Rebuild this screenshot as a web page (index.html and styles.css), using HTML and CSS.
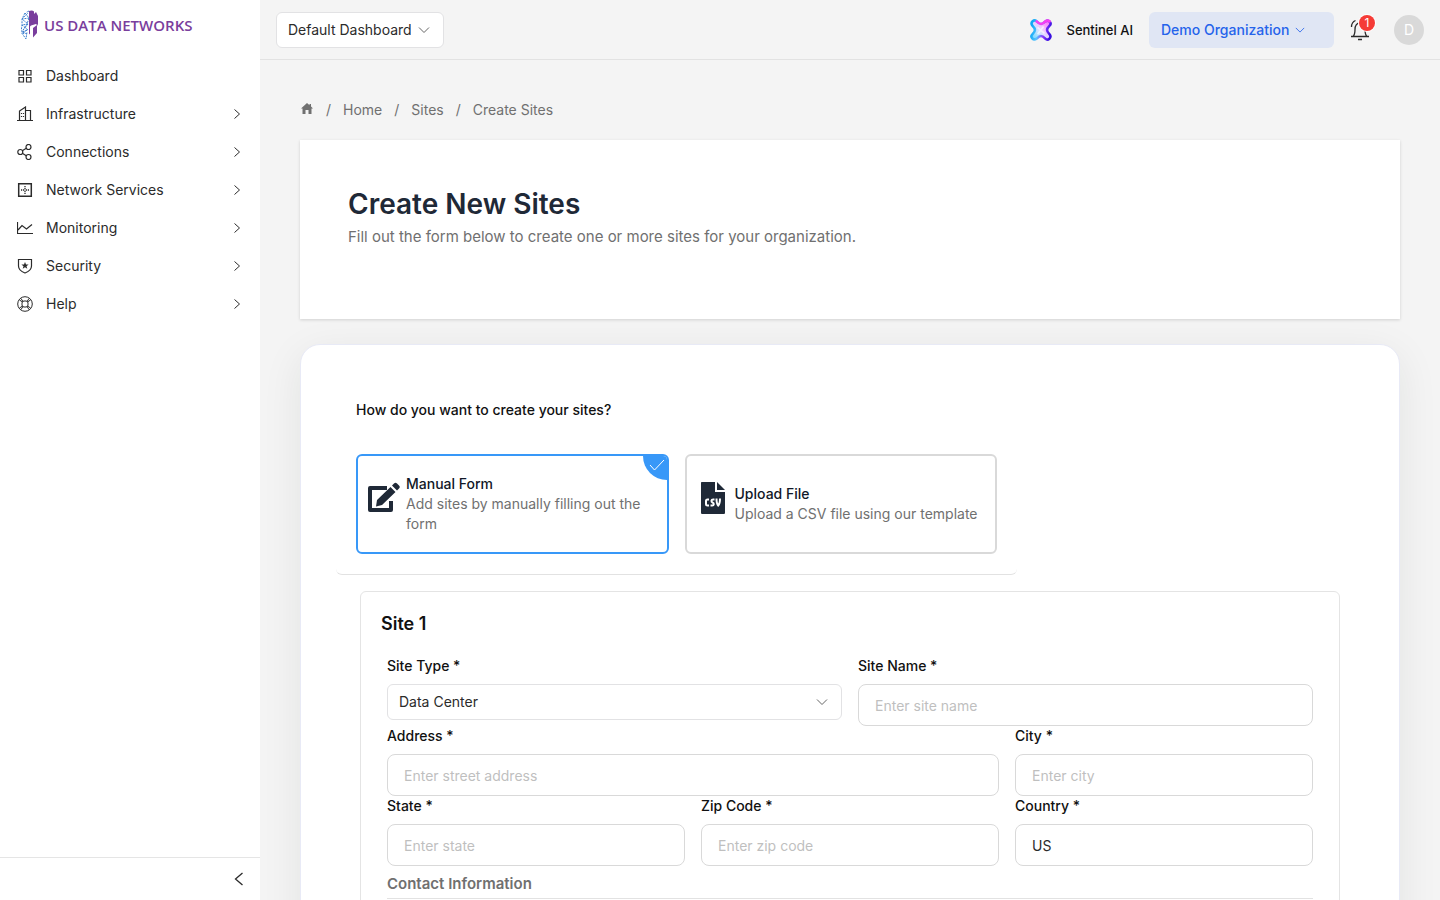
FILE: index.html
```html
<!DOCTYPE html>
<html lang="en">
<head>
    <meta charset="UTF-8">
    <meta name="viewport" content="width=device-width, initial-scale=1.0">
    <title>Create Sites - US Data Networks</title>
    <link rel="stylesheet" href="styles.css">
</head>
<body>
    <svg class="defs" aria-hidden="true">
        <symbol id="chevron-right" viewBox="0 0 12 12"><path d="M3.5 1.5 8.5 6l-5 4.5" /></symbol>
        <symbol id="chevron-down" viewBox="0 0 12 12"><path d="M1 3.5 6 8.5l5-5" /></symbol>
    </svg>

    <div class="app">
        <aside class="sidebar">
            <a class="logo" href="#">
                <svg width="18" height="30" viewBox="0 0 18 30">
                    <path fill="#7a3e9d" d="M8 1c2-1 4-.6 5 .5V4l2-2 2 4v8l-1 2v7l-4 4.500V18l4-3-1-1-5 1.500-1 1v7l-1 1z" />
                    <path fill="none" stroke="#3d80d0" stroke-width="1" stroke-dasharray="2 1" d="M8 1 5 2.500M4 3 1 9v6l-1 7 5 7 1-7M4 3l4 5-7 1 6 5-6 1 6 5-6 2 5 2M8 8l-2 6-5 8M1 9l6-6M7 14l-5 6M2 24l4-5" />
                </svg>
                <span>US DATA NETWORKS</span>
            </a>

            <nav class="nav">
                <a href="#">
                    <svg class="icon" viewBox="0 0 16 16"><path d="M2 2.500h4.500V7H2zM9.500 2.500H14V7H9.500zM2 9.500h4.500V14H2zM9.500 9.500H14V14H9.500z" /></svg>
                    <span>Dashboard</span>
                </a>
                <a href="#">
                    <svg class="icon" viewBox="0 0 16 16"><path d="M0 14.500h16M2.500 14.500V5l6-4v13.500M8.500 4.500h5v10" /><path stroke-dasharray="1 2" d="M4.500 7v5M6.500 7v5" /></svg>
                    <span>Infrastructure</span>
                    <svg class="arrow"><use href="#chevron-right" /></svg>
                </a>
                <a href="#">
                    <svg class="icon" viewBox="0 0 16 16"><circle cx="3.300" cy="8" r="2.500" /><circle cx="11.500" cy="3" r="2.500" /><circle cx="11.500" cy="13" r="2.500" /><path d="m5.300 6.800 4-2.500M5.300 9.200l4 2.500" /></svg>
                    <span>Connections</span>
                    <svg class="arrow"><use href="#chevron-right" /></svg>
                </a>
                <a href="#">
                    <svg class="icon" viewBox="0 0 16 16"><path stroke-width="1.500" d="M1.700 1.700h12.600v12.600H1.700z" /><path d="M4 8h1.200M6 8h1M9 8h1M10.800 8H12M8 4v1.200M8 6v1M8 7.500v1M8 9v1M8 10.800V12" stroke-width="1.300" /></svg>
                    <span>Network Services</span>
                    <svg class="arrow"><use href="#chevron-right" /></svg>
                </a>
                <a href="#">
                    <svg class="icon" viewBox="0 0 16 16"><path d="M.5 2v11.500H16M1 10l4-4.500L9.500 9 15 4.500" /></svg>
                    <span>Monitoring</span>
                    <svg class="arrow"><use href="#chevron-right" /></svg>
                </a>
                <a href="#">
                    <svg class="icon" viewBox="0 0 16 16"><path d="M1.500 1.500h13V8c0 3.500-2.500 5.500-6.500 7-4-1.500-6.500-3.500-6.500-7z" /><path class="solid" d="m8 4 1 2.500h2.600L9.500 8.200l.8 2.600L8 9.300l-2.300 1.500.8-2.600-2.100-1.700H7z" /></svg>
                    <span>Security</span>
                    <svg class="arrow"><use href="#chevron-right" /></svg>
                </a>
                <a href="#">
                    <svg class="icon" viewBox="0 0 16 16"><g stroke-width="1"><circle cx="8" cy="8" r="7.300" /><rect x="5" y="5" width="6" height="6" rx="2" /><path d="M2.500 4 5.500 6M4 2.500l2 3M13.500 4l-3 2M12 2.500l-2 3M2.500 12l3-2M4 13.500l2-3M13.500 12l-3-2M12 13.500l-2-3" /></g></svg>
                    <span>Help</span>
                    <svg class="arrow"><use href="#chevron-right" /></svg>
                </a>
            </nav>

            <div class="sidebar-footer">
                <button type="button" aria-label="Collapse menu">
                    <svg width="14" height="14" viewBox="0 0 14 14"><path d="M10.500 1 3.500 7l7 6" /></svg>
                </button>
            </div>
        </aside>

        <div class="main">
            <header class="topbar">
                <div class="select dashboard-select">
                    <select aria-label="Dashboard">
                        <option>Default Dashboard</option>
                    </select>
                    <svg><use href="#chevron-down" /></svg>
                </div>

                <div class="topbar-right">
                    <a class="sentinel" href="#">
                        <svg width="24" height="24" viewBox="-1 -1 28 28">
                            <defs>
                                <linearGradient id="sentinelFill" x1="1" y1="0" x2="0" y2="1">
                                    <stop offset="0" stop-color="#ff5cf4" />
                                    <stop offset=".4" stop-color="#f3c4ff" />
                                    <stop offset=".6" stop-color="#d4e4ff" />
                                    <stop offset="1" stop-color="#5fd8ff" />
                                </linearGradient>
                                <linearGradient id="sentinelEdge" x1="0" y1=".4" x2="1" y2=".6">
                                    <stop offset="0" stop-color="#12a8f5" />
                                    <stop offset=".35" stop-color="#58c4ff" />
                                    <stop offset=".65" stop-color="#8d3cff" />
                                    <stop offset="1" stop-color="#3a10e0" />
                                </linearGradient>
                            </defs>
                            <path fill="url(#sentinelFill)" stroke="url(#sentinelEdge)" stroke-width="3" d="M8 3c2 2 3 3 5 3s3-1 5-3c4-3 8 2 5 5-2 2-3 3-3 5s1 3 3 5c3 4-2 8-5 5-2-2-3-3-5-3s-3 1-5 3c-4 3-8-2-5-5 2-2 3-3 3-5s-1-3-3-5C0 4 5 0 8 3z" />
                            <path fill="none" stroke="#f73df2" stroke-width="3" stroke-linecap="round" d="M8 3c2 2 3 3 5 3s3-1 5-3c2-1.500 4-1 5 0" />
                            <path fill="none" stroke="#fff" stroke-opacity=".6" stroke-width="2" d="m9 10 8 7M16 9l-7 9" />
                        </svg>
                        <span>Sentinel AI</span>
                    </a>
                    <button type="button" class="org-button">
                        <span>Demo Organization</span>
                        <svg><use href="#chevron-down" /></svg>
                    </button>
                    <button type="button" class="bell" aria-label="Notifications">
                        <svg width="20" height="22" viewBox="0 0 20 22"><path stroke-width="1.300" d="M1 17.500h18M3 17.500c2-2 2-4 2-7C5 6 7 4 10 4s5 2 5 6.500c0 3 0 5 2 7M8 20.500h4M1.500 8c0-3 1.500-5.500 4-6.500" /></svg>
                        <span class="badge">1</span>
                    </button>
                    <button type="button" class="avatar">D</button>
                </div>
            </header>

            <main class="content">
                <nav class="breadcrumb" aria-label="Breadcrumb">
                    <a href="#" aria-label="Start">
                        <svg width="14" height="11" viewBox="0 0 12 11"><path d="M6 0 0 5.500h1.500V11h3V7h3v4h3V5.500H12L10 3.600V1H8.500v1.300z" /></svg>
                    </a>
                    <span>/</span>
                    <a href="#">Home</a>
                    <span>/</span>
                    <a href="#">Sites</a>
                    <span>/</span>
                    <a href="#">Create Sites</a>
                </nav>

                <section class="page-header">
                    <h1>Create New Sites</h1>
                    <p>Fill out the form below to create one or more sites for your organization.</p>
                </section>

                <form class="form-card">
                    <fieldset class="method">
                        <legend>How do you want to create your sites?</legend>
                        <div class="options">
                            <label class="option">
                                <input type="radio" name="method" checked>
                                <svg class="option-icon" viewBox="0 0 32 32">
                                    <path fill="none" stroke="#1f2937" stroke-width="4" stroke-linejoin="round" d="M19 6H2v22h21V19" />
                                    <path d="M9 18 22.500 5l5 5L14 23l-6 1.500zM24 3.500l2-2c1-1 2-1 3 0l2 2c1 1 1 2 0 3l-2 2z" />
                                </svg>
                                <span class="option-text">
                                    <strong>Manual Form</strong>
                                    <span>Add sites by manually filling out the form</span>
                                </span>
                                <span class="tick">
                                    <svg width="16" height="12" viewBox="0 0 16 12"><path d="m1 6 4.500 5L15 1" /></svg>
                                </span>
                            </label>
                            <label class="option">
                                <input type="radio" name="method">
                                <svg class="option-icon" viewBox="0 0 32 32">
                                    <path d="M5 0h13v10h10v20.500c0 1-.5 1.500-1.500 1.500h-21C4.500 32 4 31.500 4 30.500V1c0-.6.400-1 1-1zM20 0l8 8h-8z" />
                                    <path fill="none" stroke="#fff" stroke-width="2" d="M12 17.500h-1.500c-1 0-1.500.5-1.500 1.500v3c0 1 .5 1.500 1.500 1.500H12M17.500 17.500h-1.300c-2.200 0-2.200 2.300-.7 3 2 .8 1.500 3-.3 3h-1.700M19.500 16.500c0 3 .7 6 1.700 7 1-1 1.800-4 1.800-7" />
                                </svg>
                                <span class="option-text">
                                    <strong>Upload File</strong>
                                    <span>Upload a CSV file using our template</span>
                                </span>
                                <span class="tick">
                                    <svg width="16" height="12" viewBox="0 0 16 12"><path d="m1 6 4.500 5L15 1" /></svg>
                                </span>
                            </label>
                        </div>
                    </fieldset>

                    <section class="site">
                        <h2>Site 1</h2>
                        <div class="fields">
                            <div class="field half">
                                <label for="siteType">Site Type *</label>
                                <div class="select">
                                    <select id="siteType">
                                        <option>Data Center</option>
                                    </select>
                                    <svg><use href="#chevron-down" /></svg>
                                </div>
                            </div>
                            <div class="field half">
                                <label for="siteName">Site Name *</label>
                                <input id="siteName" type="text" placeholder="Enter site name">
                            </div>
                            <div class="field wide">
                                <label for="address">Address *</label>
                                <input id="address" type="text" placeholder="Enter street address">
                            </div>
                            <div class="field">
                                <label for="city">City *</label>
                                <input id="city" type="text" placeholder="Enter city">
                            </div>
                            <div class="field">
                                <label for="state">State *</label>
                                <input id="state" type="text" placeholder="Enter state">
                            </div>
                            <div class="field">
                                <label for="zip">Zip Code *</label>
                                <input id="zip" type="text" placeholder="Enter zip code">
                            </div>
                            <div class="field">
                                <label for="country">Country *</label>
                                <input id="country" type="text" value="US">
                            </div>
                        </div>
                        <h3>Contact Information</h3>
                    </section>
                </form>
            </main>
        </div>
    </div>
</body>
</html>
```
FILE: styles.css
```css
* {
    box-sizing: border-box;
}

body {
    margin: 0;
    font-family: Inter, "Liberation Sans", sans-serif;
    font-size: 14px;
    line-height: 20px;
    color: #2b2b2b;
    background: #f4f4f4;
}

a {
    color: inherit;
    text-decoration: none;
}

button,
input,
select {
    font: inherit;
    color: inherit;
}

button {
    border: none;
    padding: 0;
    background: none;
    cursor: pointer;
}

h1, h2, h3, p {
    margin: 0;
}

svg {
    flex: none;
    fill: none;
    stroke: currentColor;
}

.defs {
    display: none;
}

.app {
    display: flex;
    height: 100vh;
}

/* Sidebar */
.sidebar {
    flex: 0 0 260px;
    display: flex;
    flex-direction: column;
    background: #fff;
}

.logo {
    display: flex;
    align-items: center;
    gap: 5px;
    height: 50px;
    padding-left: 21px;
    color: #7a3e9d;
    font-family: "Open Sans", sans-serif;
    font-size: 15px;
    font-weight: 600;
}

.logo svg {
    stroke: none;
}

.nav {
    flex: 1;
    padding: 7px 17px;
}

.nav a {
    display: flex;
    align-items: center;
    gap: 13px;
    height: 38px;
}

.icon {
    width: 16px;
    height: 16px;
    stroke-width: 1.2;
}

.icon .solid {
    fill: currentColor;
    stroke: none;
}

.arrow {
    width: 12px;
    height: 12px;
    margin-left: auto;
}

.sidebar-footer {
    display: flex;
    justify-content: flex-end;
    padding: 14px;
    border-top: 1px solid #e5e5e5;
}

.sidebar-footer button {
    display: flex;
    height: 14px;
}

.sidebar-footer svg {
    stroke-width: 1.3;
}

/* Top bar */
.main {
    flex: 1;
    min-width: 0;
    display: flex;
    flex-direction: column;
}

.topbar {
    flex: none;
    display: flex;
    align-items: center;
    justify-content: space-between;
    height: 60px;
    padding: 0 16px;
    border-bottom: 1px solid #e2e2e2;
}

.topbar-right {
    display: flex;
    align-items: center;
}

.select {
    position: relative;
}

.select select {
    width: 100%;
    height: 36px;
    padding: 0 32px 0 11px;
    border: 1px solid #e2e2e4;
    border-radius: 6px;
    background: #fff;
    appearance: none;
}

.select svg {
    position: absolute;
    top: 12px;
    right: 14px;
    width: 12px;
    height: 12px;
    color: #666;
    pointer-events: none;
}

.dashboard-select {
    width: 168px;
}

.sentinel {
    display: flex;
    align-items: center;
    gap: 13px;
    font-size: 13px;
    font-weight: 500;
    color: #111;
}

.sentinel svg {
    stroke: none;
}

.org-button {
    display: flex;
    align-items: center;
    gap: 6px;
    width: 185px;
    height: 36px;
    margin-left: 16px;
    padding-left: 12px;
    border-radius: 6px;
    background: #e0e6f4;
    color: #2563eb;
    font-weight: 500;
}

.org-button svg {
    width: 10px;
    height: 12px;
}

.bell {
    position: relative;
    display: flex;
    margin: 0 24px 0 16px;
}

.badge {
    position: absolute;
    top: -4px;
    right: -5px;
    width: 16px;
    height: 16px;
    border-radius: 50%;
    background: #f53b36;
    box-shadow: 0 0 0 1px #fff;
    color: #fff;
    font-size: 12px;
    line-height: 16px;
}

.avatar {
    width: 30px;
    height: 30px;
    border-radius: 50%;
    background: #d9d9d9;
    color: #fff;
}

/* Content */
.content {
    flex: 1;
    min-height: 0;
    padding: 40px;
    overflow-y: auto;
    scrollbar-width: none;
}

.breadcrumb {
    display: flex;
    gap: 12px;
    height: 40px;
    color: #707070;
}

.breadcrumb svg {
    display: block;
    margin-top: 3px;
    fill: currentColor;
    stroke: none;
}

.page-header {
    height: 179px;
    padding: 46px 48px;
    background: #fff;
    box-shadow: 0 1px 3px rgba(0, 0, 0, 0.15);
}

.page-header h1 {
    font-size: 28px;
    line-height: 36px;
    font-weight: 600;
    color: #1f2937;
}

.page-header p {
    margin-top: 5px;
    font-size: 15px;
    color: #707070;
}

.form-card {
    margin-top: 25px;
    padding: 35px 35px 60px;
    border: 1px solid #e8eaf6;
    border-radius: 20px;
    background: #fff;
    box-shadow: 0 10px 40px rgba(20, 40, 30, 0.08);
}

/* Creation method */
.method {
    max-width: 681px;
    margin: 0;
    padding: 20px;
    border: 0;
    border-bottom: 1px solid #e2e2e2;
    border-radius: 6px;
}

.method legend {
    float: left;
    width: 100%;
    padding: 0;
    margin-bottom: 34px;
    font-weight: 500;
    color: #111;
}

.options {
    clear: both;
    display: grid;
    grid-template-columns: 1fr 1fr;
    gap: 16px;
}

.option {
    position: relative;
    display: flex;
    align-items: center;
    gap: 6px;
    height: 100px;
    padding: 0 10px;
    border: 2px solid #d9d9d9;
    border-radius: 6px;
    overflow: hidden;
    cursor: pointer;
}

.option:has(input:checked) {
    border-color: #3898f8;
}

.option input {
    position: absolute;
    opacity: 0;
}

.option-icon {
    width: 32px;
    height: 32px;
    margin-bottom: 12px;
    fill: #1f2937;
    stroke: none;
}

.option-text strong {
    display: block;
    font-weight: 500;
    color: #111827;
}

.option-text span {
    color: #707070;
}

.tick {
    position: absolute;
    top: 0;
    right: 0;
    display: none;
    justify-content: flex-end;
    width: 24px;
    height: 24px;
    padding: 3px 2px;
    border-bottom-left-radius: 24px;
    background: #3898f8;
    color: #fff;
}

.option input:checked ~ .tick {
    display: flex;
}

/* Site form */
.site {
    margin: 16px 24px 0;
    padding: 20px 26px 60px;
    border: 1px solid #e4e4e4;
    border-radius: 6px;
}

.site h2 {
    margin: 0 -6px 20px;
    font-size: 18px;
    line-height: 24px;
    font-weight: 600;
    color: #111;
}

.fields {
    display: grid;
    grid-template-columns: repeat(6, 1fr);
    column-gap: 16px;
}

.field {
    grid-column: span 2;
    height: 70px;
}

.field.half {
    grid-column: span 3;
}

.field.wide {
    grid-column: span 4;
}

.field label {
    display: block;
    margin-bottom: 8px;
    font-weight: 500;
    color: #111;
}

.field input {
    width: 100%;
    height: 42px;
    padding: 0 16px;
    border: 1px solid #d9d9d9;
    border-radius: 8px;
    background: #fff;
}

.field input::placeholder {
    color: #bfbfbf;
}

.site h3 {
    padding: 8px 0 4px;
    border-bottom: 1px solid #e2e2e2;
    font-size: 15px;
    font-weight: 600;
    color: #707070;
}
```
